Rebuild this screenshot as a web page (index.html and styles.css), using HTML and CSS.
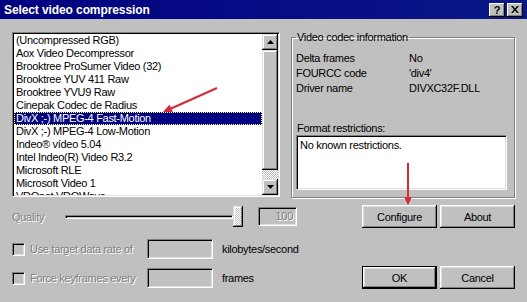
FILE: index.html
```html
<!DOCTYPE html>
<html>
<head>
    <meta charset="UTF-8">
    <title>Select video compression</title>
    <link rel="stylesheet" href="styles.css">
</head>
<body>
    <div class="window">
        <div class="titlebar">
            <span class="title">Select video compression</span>
            <div class="caption-buttons">
                <span class="cap-btn help">?</span>
                <span class="cap-btn">
                    <svg width="8" height="7" viewBox="0 0 8 7"><path d="M0 0h2l2 2.5L6 0h2L5 3.5 8 7H6L4 4.5 2 7H0l3-3.5z" fill="#000"/></svg>
                </span>
            </div>
        </div>

        <div class="client">
            <div class="top">
                <div class="listbox">
                    <ul class="items">
                        <li>(Uncompressed RGB)</li>
                        <li>Aox Video Decompressor</li>
                        <li>Brooktree ProSumer Video (32)</li>
                        <li>Brooktree YUV 411 Raw</li>
                        <li>Brooktree YVU9 Raw</li>
                        <li>Cinepak Codec de Radius</li>
                        <li class="selected">DivX ;-) MPEG-4 Fast-Motion</li>
                        <li>DivX ;-) MPEG-4 Low-Motion</li>
                        <li>Indeo® vídeo 5.04</li>
                        <li>Intel Indeo(R) Video R3.2</li>
                        <li>Microsoft RLE</li>
                        <li>Microsoft Video 1</li>
                        <li>VDOnet VDOWave</li>
                    </ul>
                    <div class="scrollbar">
                        <div class="sb-btn">
                            <svg width="7" height="4" viewBox="0 0 7 4"><path d="M3.5 0L7 4H0z" fill="#000"/></svg>
                        </div>
                        <div class="sb-thumb"></div>
                        <div class="sb-track"></div>
                        <div class="sb-btn">
                            <svg width="7" height="4" viewBox="0 0 7 4"><path d="M0 0h7L3.5 4z" fill="#000"/></svg>
                        </div>
                    </div>
                </div>

                <fieldset class="groupbox">
                    <legend>Video codec information</legend>
                    <dl class="info">
                        <dt>Delta frames</dt><dd>No</dd>
                        <dt>FOURCC code</dt><dd>'div4'</dd>
                        <dt>Driver name</dt><dd>DIVXC32F.DLL</dd>
                    </dl>
                    <div class="restrict-label">Format restrictions:</div>
                    <div class="restrict-box">No known restrictions.</div>
                </fieldset>
            </div>

            <div class="bottom">
                <div class="options">
                    <div class="quality-row">
                        <span class="q-label disabled">Quality</span>
                        <div class="slider">
                            <div class="track"></div>
                            <div class="thumb"></div>
                        </div>
                        <div class="edit q-edit disabled">100</div>
                    </div>
                    <div class="opt-row first">
                        <span class="checkbox"></span>
                        <span class="opt-label disabled">Use target data rate of</span>
                        <div class="edit opt-edit"></div>
                        <span class="unit">kilobytes/second</span>
                    </div>
                    <div class="opt-row">
                        <span class="checkbox"></span>
                        <span class="opt-label disabled">Force keyframes every</span>
                        <div class="edit opt-edit"></div>
                        <span class="unit">frames</span>
                    </div>
                </div>

                <div class="buttons">
                    <div class="btn-row">
                        <button class="btn">Configure</button>
                        <button class="btn">About</button>
                    </div>
                    <div class="btn-row last">
                        <button class="btn default">OK</button>
                        <button class="btn">Cancel</button>
                    </div>
                </div>
            </div>
        </div>

        <svg class="annotations" width="527" height="302" viewBox="0 0 527 302">
            <line x1="217" y1="88" x2="170" y2="109" stroke="#d42a3a" stroke-width="2"/>
            <polygon points="163,112 172.8,112 169.6,104.6" fill="#d42a3a"/>
            <line x1="408" y1="163" x2="408" y2="198" stroke="#d42a3a" stroke-width="2"/>
            <polygon points="408,205 404,197 412,197" fill="#d42a3a"/>
        </svg>
    </div>
</body>
</html>
```

FILE: styles.css
```css
* {
    box-sizing: border-box;
}

body {
    margin: 0;
    font-family: "Liberation Sans", Arial, sans-serif;
    font-size: 11px;
    letter-spacing: -0.3px;
    color: #000;
    background: #c0c0c0;
}

.window {
    position: relative;
    width: 527px;
    height: 302px;
    background: #c0c0c0;
    overflow: hidden;
}

/* title bar */
.titlebar {
    height: 19px;
    display: flex;
    align-items: center;
    justify-content: space-between;
    padding: 0 4px 0 4px;
    background: linear-gradient(to right, #000080, #0a1888);
}

.title {
    color: #fff;
    font-weight: bold;
    font-size: 12px;
    letter-spacing: -0.1px;
}

.caption-buttons {
    display: flex;
    gap: 2px;
}

.cap-btn {
    width: 16px;
    height: 14px;
    display: flex;
    align-items: center;
    justify-content: center;
    background: #c0c0c0;
    box-shadow: inset -1px -1px #000, inset 1px 1px #fff, inset -2px -2px #808080;
    font-weight: bold;
    font-size: 11px;
    letter-spacing: 0;
}

/* client area */
.client {
    padding: 13px 12px 0 12px;
}

.top {
    display: flex;
    align-items: flex-start;
}

.listbox {
    width: 268px;
    height: 165px;
    display: flex;
    padding: 1px;
    background: #fff;
    border: 1px solid;
    border-color: #808080 #fff #fff #808080;
    box-shadow: inset 1px 1px #000, inset -1px -1px #dfdfdf;
}

.items {
    flex: 1;
    margin: 0;
    padding: 0;
    list-style: none;
    overflow: hidden;
}

.items li {
    height: 13px;
    line-height: 13px;
    padding-left: 2px;
    white-space: nowrap;
}

.items li.selected {
    background: #000080;
    color: #fff;
    outline: 1px dotted #ffff80;
    outline-offset: -1px;
}

.scrollbar {
    width: 16px;
    display: flex;
    flex-direction: column;
}

.sb-btn, .sb-thumb {
    background: #c0c0c0;
    box-shadow: inset -1px -1px #000, inset 1px 1px #dfdfdf, inset -2px -2px #808080, inset 2px 2px #fff;
}

.sb-btn {
    height: 16px;
    display: flex;
    align-items: center;
    justify-content: center;
}

.sb-thumb {
    height: 120px;
}

.sb-track {
    flex: 1;
    background: repeating-conic-gradient(#c0c0c0 0 25%, #fff 0 50%) 0 0 / 2px 2px;
}

/* group box */
.groupbox {
    width: 224px;
    height: 167px;
    margin: -1px 0 0 11px;
    padding: 0 7px 0 4px;
    border: 1px solid #808080;
    box-shadow: inset 1px 1px #fff, 1px 1px #fff;
    min-width: 0;
}

.groupbox legend {
    padding: 0 1px;
    line-height: 12px;
}

.info {
    display: grid;
    grid-template-columns: 113px 1fr;
    line-height: 15px;
    margin: 8px 0 0;
}

.info dt, .info dd {
    margin: 0;
}

.restrict-label {
    margin-top: 26px;
    line-height: 12px;
    padding-left: 1px;
}

.restrict-box {
    height: 55px;
    margin-top: 1px;
    padding: 3px 3px;
    background: #fff;
    border: 1px solid;
    border-color: #808080 #fff #fff #808080;
    box-shadow: inset 1px 1px #000, inset -1px -1px #dfdfdf;
    line-height: 12px;
}

/* bottom part */
.bottom {
    display: flex;
    margin-top: 7px;
}

.options {
    width: 338px;
}

.disabled {
    color: #808080;
    text-shadow: 1px 1px #fff;
}

.quality-row {
    height: 23px;
    display: flex;
    align-items: center;
}

.q-label {
    width: 53px;
}

.slider {
    width: 178px;
    height: 21px;
    display: flex;
    align-items: center;
}

.track {
    flex: 1;
    height: 4px;
    border: 1px solid;
    border-color: #808080 #fff #fff #808080;
    box-shadow: inset 1px 1px #000;
}

.thumb {
    width: 10px;
    height: 21px;
    background: repeating-conic-gradient(#c0c0c0 0 25%, #fff 0 50%) 0 0 / 2px 2px;
    box-shadow: inset -1px -1px #000, inset 1px 1px #dfdfdf, inset -2px -2px #808080, inset 2px 2px #fff;
}

.edit {
    background: #c0c0c0;
    border: 1px solid;
    border-color: #808080 #fff #fff #808080;
    box-shadow: inset 1px 1px #000, inset -1px -1px #dfdfdf;
}

.q-edit {
    width: 39px;
    height: 19px;
    margin-left: 15px;
    line-height: 17px;
    text-align: right;
    padding-right: 3px;
}

.opt-row {
    height: 20px;
    margin-top: 9px;
    display: flex;
    align-items: center;
}

.opt-row.first {
    margin-top: 11px;
}

.checkbox {
    width: 13px;
    height: 13px;
    background: #c0c0c0;
    border: 1px solid;
    border-color: #808080 #fff #fff #808080;
    box-shadow: inset 1px 1px #000, inset -1px -1px #dfdfdf;
}

.opt-label {
    width: 117px;
    margin-left: 5px;
}

.opt-edit {
    width: 66px;
    height: 20px;
}

.unit {
    margin-left: 9px;
}

.buttons {
    margin-left: 12px;
}

.btn-row {
    display: flex;
    gap: 3px;
}

.btn-row.last {
    margin-top: 38px;
}

.btn {
    width: 75px;
    height: 23px;
    padding: 0;
    border: none;
    background: #c0c0c0;
    box-shadow: inset -1px -1px #000, inset 1px 1px #fff, inset -2px -2px #808080, inset 2px 2px #dfdfdf;
    font-family: "Liberation Sans", Arial, sans-serif;
    font-size: 11px;
    letter-spacing: -0.3px;
    color: #000;
}

.btn.default {
    border: 1px solid #000;
}

.annotations {
    position: absolute;
    top: 0;
    left: 0;
    pointer-events: none;
}
```
